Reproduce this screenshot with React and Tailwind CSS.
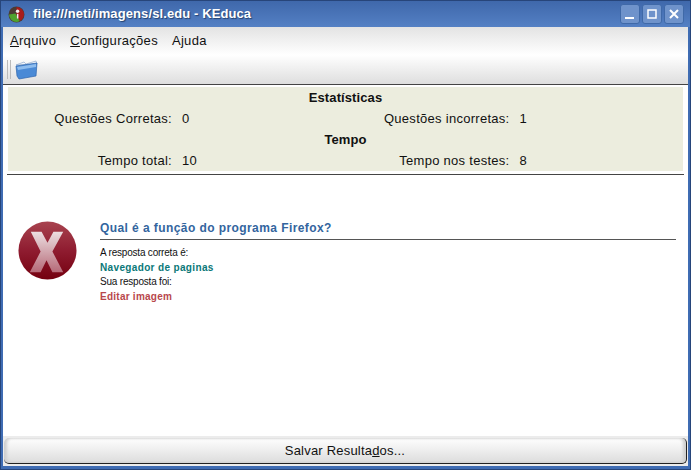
function WinButton({ children }) {
  return (
    <div className="w-[20px] h-[20px] rounded-[3px] border border-[#3f69a8] bg-[#6f93cb] flex items-center justify-center">
      <svg width="14" height="14" viewBox="0 0 14 14">{children}</svg>
    </div>
  )
}

function Stat({ label, value }) {
  return (
    <div className="flex">
      <span className="w-[164px] text-right">{label}</span>
      <span className="ml-[10px]">{value}</span>
    </div>
  )
}

function ErrorIcon() {
  return (
    <svg width="59" height="59" viewBox="0 0 60 60" className="shrink-0">
      <defs>
        <linearGradient id="ball" x1="0" y1="0" x2="0" y2="1">
          <stop offset="0" stopColor="#a8434f" />
          <stop offset="0.5" stopColor="#8f1c30" />
          <stop offset="1" stopColor="#74000f" />
        </linearGradient>
        <linearGradient id="cross" x1="0" y1="0" x2="0" y2="1">
          <stop offset="0" stopColor="#ecdfe1" />
          <stop offset="1" stopColor="#b66a78" />
        </linearGradient>
      </defs>
      <circle cx="30" cy="30" r="29.5" fill="url(#ball)" />
      <path d="M13 11h11l6 11 6-11h10L35 31l11 21H35l-6-12-6 12H12l11-21z" fill="url(#cross)" />
    </svg>
  )
}

export default function App() {
  return (
    <div className="w-[691px] h-[470px] overflow-hidden flex flex-col bg-[#3f6cb3] border border-[#27457a] font-['Liberation_Sans',sans-serif] text-[#111]">
      <div className="h-[26px] shrink-0 flex items-center pl-[7px] pr-[5px] bg-gradient-to-b from-[#3f68ab] to-[#5480c4]">
        <svg width="17" height="17" viewBox="0 0 16 16" className="shrink-0">
          <circle cx="8" cy="8" r="7.5" fill="#4b3a34" />
          <path d="M8 1a7 7 0 0 1 7 7c0 3-2 5-4 6L8 9z" fill="#a81c1c" />
          <path d="M1 8a7 7 0 0 0 7 7c1 0 2-.3 3-1L7 7z" fill="#4fa32e" />
          <circle cx="9" cy="5" r="1.6" fill="#f1eeee" />
          <rect x="8.4" y="7.4" width="1.4" height="4.4" fill="#f1eeee" />
        </svg>
        <span className="ml-[8px] text-[13px] font-bold text-white tracking-[0.1px] [text-shadow:1px_1px_1px_#23416f]">file:///neti/imagens/sl.edu - KEduca</span>
        <div className="ml-auto mr-[1px] flex gap-[2px]">
          <WinButton><rect x="2" y="10" width="9" height="2" fill="#fff" /></WinButton>
          <WinButton><rect x="3" y="3" width="8" height="8" fill="none" stroke="#fff" strokeWidth="1.5" /></WinButton>
          <WinButton><path d="M3 3l8 8M11 3l-8 8" stroke="#fff" strokeWidth="2" /></WinButton>
        </div>
      </div>

      <div className="flex-1 min-h-0 mx-[2px] mb-[3px] bg-white flex flex-col">
        <div className="h-[28px] shrink-0 flex items-center pl-[7px] gap-[14px] text-[13px] tracking-[0.3px] bg-gradient-to-b from-[#e3e3e3] to-white">
          <span><u>A</u>rquivo</span>
          <span><u>C</u>onfigurações</span>
          <span>Ajuda</span>
        </div>
        <div className="h-[30px] shrink-0 flex items-center pl-[4px] bg-gradient-to-b from-white to-[#dedede] border-b border-[#444]">
          <div className="w-[4px] h-[19px] border-x border-[#bbb]" />
          <svg width="24" height="20" viewBox="0 0 24 20" className="ml-[4px]">
            <path d="M1 5l8-3 2 2 10-3 1 3z" fill="#f2f6fb" stroke="#7d9cc4" strokeWidth=".6" />
            <path d="M1 6l21-3-1 13-17 3-2-3z" fill="#4a8ad6" stroke="#2f66ad" strokeWidth=".7" />
            <path d="M2 7l19-3v3L3 10z" fill="#8fbdee" />
          </svg>
        </div>

        <div className="mt-[2px] mx-[5px] h-[84px] shrink-0 bg-[#ecedde] flex flex-col text-[13px] tracking-[0.28px]">
          <div className="h-[21px] flex items-center justify-center font-bold tracking-[0.1px]">Estatísticas</div>
          <div className="h-[21px] grid grid-cols-2 items-center">
            <Stat label="Questões Corretas:" value="0" />
            <Stat label="Questões incorretas:" value="1" />
          </div>
          <div className="h-[21px] flex items-center justify-center font-bold tracking-[0.1px]">Tempo</div>
          <div className="h-[21px] grid grid-cols-2 items-center">
            <Stat label="Tempo total:" value="10" />
            <Stat label="Tempo nos testes:" value="8" />
          </div>
        </div>
        <div className="mt-[3px] mx-[4px] h-px shrink-0 bg-[#444]" />

        <div className="flex-1 min-h-0 flex pl-[15px] pr-[12px] pt-[46px]">
          <ErrorIcon />
          <div className="ml-[23px] flex-1">
            <div className="h-[19px] leading-[14px] text-[12px] font-bold text-[#33659e] tracking-[0.42px] border-b border-[#555]">Qual é a função do programa Firefox?</div>
            <div className="mt-[6px] text-[10px] leading-[14.5px]">
              <div className="tracking-[-0.2px]">A resposta correta é:</div>
              <div className="font-bold text-[#0b7878] tracking-[0.35px]">Navegador de paginas</div>
              <div className="tracking-[-0.2px]">Sua resposta foi:</div>
              <div className="font-bold text-[#b8474c] tracking-[0.25px]">Editar imagem</div>
            </div>
          </div>
        </div>

        <div className="h-[30px] shrink-0 bg-[#ececec] pt-[2px] px-[1px]">
          <button className="w-full h-[26px] rounded-[5px] border-b border-r border-[#222] bg-gradient-to-b from-white to-[#dcdcdc] shadow-[inset_3px_0_3px_#cfcfcf,inset_-3px_0_3px_#cfcfcf] text-[13px] tracking-[0.2px]">
            Salvar Resulta<u>d</u>os...
          </button>
        </div>
      </div>
    </div>
  )
}
